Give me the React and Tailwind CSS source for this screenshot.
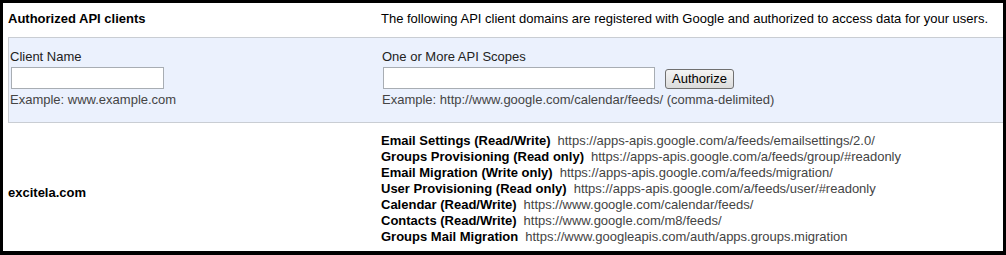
const scopes = [
  ['Email Settings (Read/Write)', 'https://apps-apis.google.com/a/feeds/emailsettings/2.0/'],
  ['Groups Provisioning (Read only)', 'https://apps-apis.google.com/a/feeds/group/#readonly'],
  ['Email Migration (Write only)', 'https://apps-apis.google.com/a/feeds/migration/'],
  ['User Provisioning (Read only)', 'https://apps-apis.google.com/a/feeds/user/#readonly'],
  ['Calendar (Read/Write)', 'https://www.google.com/calendar/feeds/'],
  ['Contacts (Read/Write)', 'https://www.google.com/m8/feeds/'],
  ['Groups Mail Migration', 'https://www.googleapis.com/auth/apps.groups.migration'],
];

export default function App() {
  return (
    <div
      className="w-[1006px] h-[255px] bg-black pl-[3px] pt-[3px] pr-[3px] pb-[4px] text-[13px] leading-4 text-[#222]"
      style={{ fontFamily: '"Liberation Sans", Arial, sans-serif' }}
    >
      <div className="h-full bg-white flex flex-col overflow-hidden">
        {/* header row */}
        <div className="h-[34px] flex items-center pb-[2px]">
          <div className="w-[378px] pl-[5px] font-bold text-black">Authorized API clients</div>
          <div className="text-black">
            The following API client domains are registered with Google and authorized to access data for your users.
          </div>
        </div>

        {/* add client form */}
        <div className="ml-[5px] h-[86px] bg-[#ebf1fd] border-t border-b border-l border-[#c9cdd3] pt-[11px] pl-[1px] flex">
          <div className="w-[372px] flex flex-col">
            <span>Client Name</span>
            <input
              type="text"
              className="mt-[2px] ml-[1px] w-[153px] h-[22px] bg-white border border-[#a8adb3] outline-none"
            />
            <span className="mt-[3px] text-[#444]">Example: www.example.com</span>
          </div>
          <div className="flex flex-col">
            <span>One or More API Scopes</span>
            <div className="mt-[2px] ml-[1px] flex items-center">
              <input
                type="text"
                className="w-[272px] h-[22px] bg-white border border-[#a8adb3] outline-none"
              />
              <button className="ml-[10px] w-[69px] h-[20px] mt-[1px] rounded-[3px] border border-[#707070] bg-gradient-to-b from-[#f4f4f4] to-[#dcdcdc] text-[13px] text-black leading-none">
                Authorize
              </button>
            </div>
            <span className="mt-[3px] text-[#444]">Example: http://www.google.com/calendar/feeds/ (comma-delimited)</span>
          </div>
        </div>

        {/* client row */}
        <div className="flex items-center pt-[10px]">
          <div className="w-[378px] pl-[5px] pt-[8px] font-bold text-black">excitela.com</div>
          <div className="flex flex-col">
            {scopes.map(([name, url]) => (
              <div key={name} className="whitespace-nowrap">
                <span className="font-bold text-black">{name}</span>
                <span className="ml-[7px] text-[#444]">{url}</span>
              </div>
            ))}
          </div>
        </div>
      </div>
    </div>
  );
}
